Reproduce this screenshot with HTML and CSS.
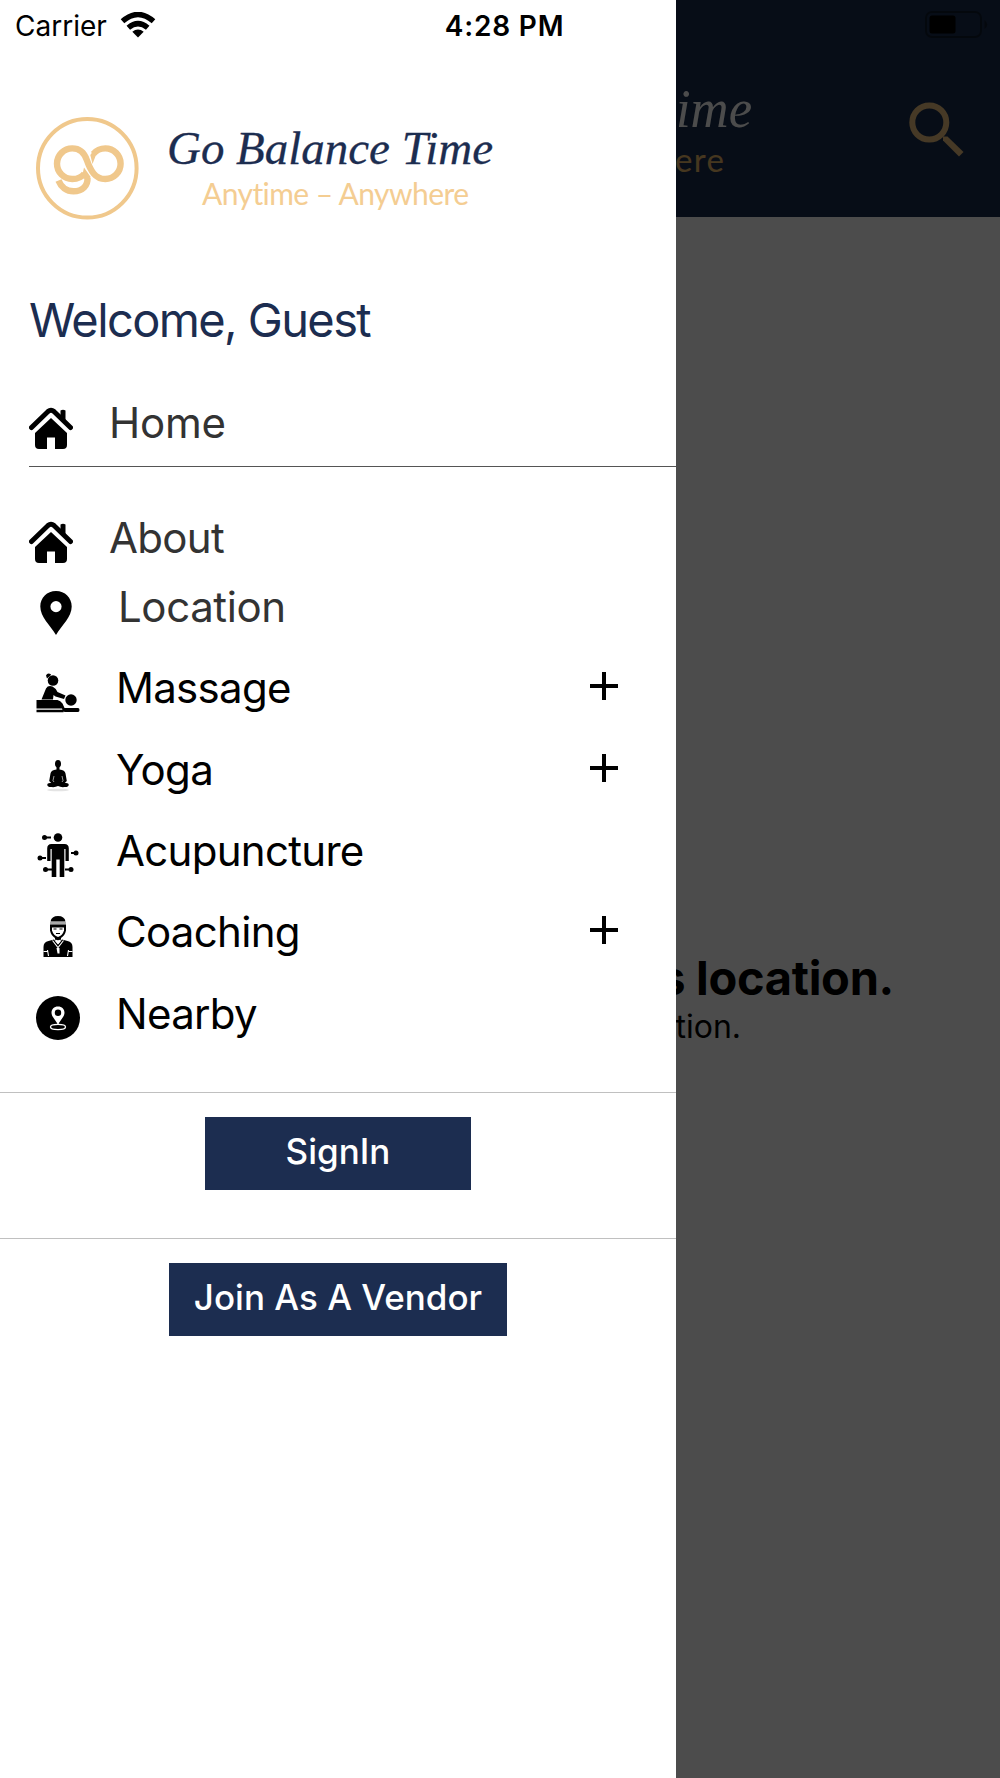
FILE: index.html
```html
<!DOCTYPE html>
<html lang="en">

	<head>
		<meta charset="utf-8" />
		<title>Go Balance Time</title>
		<link rel="stylesheet" href="styles.css">
	</head>

	<body>
		<div class="app">
			<!-- page behind the drawer -->
			<div class="page">
				<div class="page-header">
					<div class="page-status">
						<svg class="battery" width="64" height="28" viewBox="0 0 64 28">
							<rect x="1" y="1" width="55" height="25" rx="6" fill="none" stroke="#000" stroke-opacity=".4" stroke-width="2" />
							<rect x="4.500" y="4.500" width="26" height="18" rx="2.500" />
							<path d="M59.500 9 Q65 13.500 59.500 18z" fill-opacity=".4" />
						</svg>
					</div>
					<div class="page-bar">
						<svg class="page-logo" width="84" height="110" viewBox="0 0 84 110">
							<text class="title" x="1" y="56" textLength="76" lengthAdjust="spacingAndGlyphs">ime</text>
							<text class="sub" x="0" y="101" textLength="49">ere</text>
						</svg>
						<svg class="search" width="56" height="56" viewBox="0 0 56 56">
							<circle cx="20.300" cy="20.500" r="17" fill="none" stroke="#e9bf7f" stroke-width="6" />
							<path d="M34 34.500h4.500L54.500 50l-4.500 4.500-16-16z" fill="#e9bf7f" />
						</svg>
					</div>
				</div>
				<div class="page-body">
					<h2>s location.</h2>
					<p>tion.</p>
				</div>
			</div>
			<div class="mask"></div>

			<!-- drawer -->
			<div class="drawer">
				<div class="status">
					<span class="carrier">Carrier</span>
					<svg class="wifi" width="36" height="26" viewBox="0 0 36 26">
						<path d="M2.500 9.300Q18-4.300 33.500 9.300M8.300 15.800Q18 7.500 27.700 15.800" fill="none" stroke="#000" stroke-width="5.400" />
						<path d="M12.300 19.800Q18 15 23.700 19.800L18 25.500z" />
					</svg>
					<span class="time">4:28 PM</span>
				</div>

				<svg class="logo" width="480" height="110" viewBox="0 0 480 110">
					<g fill="none" stroke="#f0c88c">
						<circle cx="57.300" cy="54.300" r="49.300" stroke-width="4" />
						<!-- g bowl runs into the o -->
						<g stroke-width="6.400">
							<path d="M54.500 59.500C52 63 47.500 65 42.300 65a15.300 15.300 0 1 1 0-30.600c7.500 0 12 4.500 14.500 11.600C60.500 56.500 65 65 75.300 65a15.300 15.300 0 1 0 0-30.600c-5 0-9 2-12 5.600" />
							<path d="M28.500 66.500C31 73 36.500 77.300 43.500 77.300c9 0 14.500-5.800 14-13.300" />
						</g>
					</g>
					<path d="M52 62.500l2-9L60.700 63l-4 4zM60.300 41l2.500-3.500 3 4-3.300 8.500z" fill="#f0c88c" />
					<text class="title" x="137" y="49.500" textLength="326" lengthAdjust="spacingAndGlyphs">Go Balance Time</text>
					<text class="sub" x="172" y="90.500" textLength="267">Anytime – Anywhere</text>
				</svg>

				<h1 class="welcome">Welcome, Guest</h1>

				<div class="row row-home">
					<svg class="icon" width="44" height="44" viewBox="0 0 44 44">
						<path d="M2.500 21.500L19 5.500Q22 3 25 5.500L41.500 21.500" fill="none" stroke="#000" stroke-width="5" stroke-linecap="round" />
						<path d="M31.500 4.500q2.500-1.500 5 0V17l-5-5z" />
						<path d="M22 12L38 27v12q0 4-4 4h-8V31.500h-8V43h-8q-4 0-4-4V27z" />
					</svg>
					<span>Home</span>
				</div>

				<div class="row row-about">
					<svg class="icon" width="44" height="44" viewBox="0 0 44 44">
						<path d="M2.500 21.500L19 5.500Q22 3 25 5.500L41.500 21.500" fill="none" stroke="#000" stroke-width="5" stroke-linecap="round" />
						<path d="M31.500 4.500q2.500-1.500 5 0V17l-5-5z" />
						<path d="M22 12L38 27v12q0 4-4 4h-8V31.500h-8V43h-8q-4 0-4-4V27z" />
					</svg>
					<span>About</span>
				</div>
				<div class="row row-location">
					<svg class="icon" width="44" height="44" viewBox="0 0 44 44">
						<path d="M22 0C13 0 6.300 6.800 6.300 15.500 6.300 26 16 34 22 44c6-10 15.700-18 15.700-28.500C37.700 6.800 31 0 22 0zm0 10a5.600 5.600 0 1 1 0 11.200 5.600 5.600 0 0 1 0-11.200z" />
					</svg>
					<span>Location</span>
				</div>

				<div class="menu">
					<div class="row">
						<svg class="icon" width="44" height="44" viewBox="0 0 44 44">
							<circle cx="17" cy="9.500" r="5.300" />
							<path d="M15 3.300Q11.500 1 10 4.500l1 3 3.500-3z" />
							<path d="M5.500 28.500l4.500-11q2-3.500 6.500-2 3 1.500 5 5.500l8 3.500-1.500 3.500-8.500-2.500-2-1.500-.5 4.500z" />
							<circle cx="35" cy="29" r="5.700" />
							<path d="M.5 29h21q3 .5 5 3.500l2 4.500H42q1.500 0 1.500 2t-1.500 2H29q-2 0-3-3.500H.5zM.5 38.700h27v2.500H.5z" />
						</svg>
						<span>Massage</span>
						<svg class="plus" width="28" height="28" viewBox="0 0 28 28"><path d="M0 14h28M14 0v28" stroke="#000" stroke-width="4" /></svg>
					</div>
					<div class="row">
						<svg class="icon" width="44" height="44" viewBox="0 0 44 44">
							<ellipse cx="22" cy="38" rx="11" ry="1.300" fill="#e4e4e4" />
							<ellipse cx="22" cy="11.800" rx="3" ry="3.800" />
							<path d="M20.500 14h3v3.500q5.500.5 6 4l1.300 7.500-2 2q4-.5 4 1.700-.3 2.500-4.300 2.300-3.500.5-6.500-1-3 1.500-6.500 1-4 .2-4.300-2.300 0-2.200 4-1.700l-2-2 1.300-7.500q.5-3.500 6-4z" />
							<path d="M18 24l-1 4.500 1 1.500M26 24l1 4.500-1 1.500" fill="none" stroke="#fff" stroke-width=".6" />
						</svg>
						<span>Yoga</span>
						<svg class="plus" width="28" height="28" viewBox="0 0 28 28"><path d="M0 14h28M14 0v28" stroke="#000" stroke-width="4" /></svg>
					</div>
					<div class="row">
						<svg class="icon" width="44" height="44" viewBox="0 0 44 44">
							<circle cx="22" cy="4.500" r="4.300" />
							<path d="M15.500 11h13q4.300 0 4.300 4.500V28h-3.300V16h-1.200v28h-4.600V26.500h-3.400V44h-4.600V16h-1.200v12h-3.300V15.500q0-4.500 4.300-4.500z" />
							<path d="M8 4.500h7M4 25h6M10 36.500h6M41 20h-6M35 36.500h-6" stroke="#000" stroke-width="2.200" />
							<circle cx="8.500" cy="4.500" r="2.500" />
							<circle cx="4" cy="25" r="2.500" />
							<circle cx="9.500" cy="36.500" r="2.500" />
							<circle cx="40" cy="20" r="2.500" />
							<circle cx="35" cy="36.500" r="2.500" />
						</svg>
						<span>Acupuncture</span>
					</div>
					<div class="row">
						<svg class="icon" width="44" height="44" viewBox="0 0 44 44">
							<path d="M14.500 6.500Q15.500 1 22 1t7.500 5.500z" />
							<path d="M14 7h16v2.500H14z" fill="#aaa" />
							<path d="M14 9.500h16v6q-1 5-5 7.500v3l-3 1.500-3-1.500v-3q-4-2.500-5-7.500z" />
							<path d="M16 12.500h12v3q-1.500 5-6 6.500-4.500-1.500-6-6.500z" fill="#fff" />
							<path d="M17.500 14h3M23.500 14h3M20 18.500h4" stroke="#000" stroke-width="1.200" />
							<path d="M7.500 42V32q0-5 5-6l5.500-1.500 4 5 4-5 5.500 1.500q5 1 5 6v10z" />
							<path d="M16.500 25.500l5.500 7 5.500-7M7.500 36.500H12M32 36.500h4.500M12.500 41l-1-6M31.500 41l1-6" fill="none" stroke="#fff" stroke-width="1.100" />
							<path d="M20.500 33h3v5.500h-2z" fill="#fff" />
							<path d="M19.500 24.500q2.500 1.500 5 0l.5 1.500-3 3-3-3z" fill="#fff" />
						</svg>
						<span>Coaching</span>
						<svg class="plus" width="28" height="28" viewBox="0 0 28 28"><path d="M0 14h28M14 0v28" stroke="#000" stroke-width="4" /></svg>
					</div>
					<div class="row">
						<svg class="icon" width="44" height="44" viewBox="0 0 44 44">
							<circle cx="22" cy="22" r="22" />
							<ellipse cx="22" cy="31" rx="7.500" ry="2.600" fill="none" stroke="#fff" stroke-width="1.300" />
							<path d="M22 10.500c-4 0-6.500 2.700-6.500 6.300C15.500 21 20 24 22 29c2-5 6.500-8 6.500-12.200 0-3.600-2.500-6.300-6.500-6.300z" fill="#fff" />
							<circle cx="22" cy="16.800" r="3.200" />
						</svg>
						<span>Nearby</span>
					</div>
				</div>

				<div class="action">
					<button class="btn btn-signin">SignIn</button>
				</div>
				<div class="action">
					<button class="btn btn-vendor">Join As A Vendor</button>
				</div>
			</div>
		</div>
	</body>

</html>
```
FILE: styles.css
```css
* {
	margin: 0;
	padding: 0;
	box-sizing: border-box;
}

body {
	font-family: Inter, "Liberation Sans", sans-serif;
	background: #fff;
	color: #000;
}

svg {
	display: block;
	flex: none;
}

.app {
	position: relative;
	width: 1000px;
	height: 1778px;
	overflow: hidden;
}

/* page */
.page {
	display: flex;
	flex-direction: column;
	height: 100%;
}

.page-header {
	height: 217px;
	background: #1a2d4d;
}

.page-status {
	display: flex;
	justify-content: flex-end;
	height: 51px;
	padding: 11px 11px 0 0;
}

.page-bar {
	display: flex;
	justify-content: space-between;
	padding: 20px 35px 0 675px;
}

.search {
	margin-top: 31px;
}

.page-body {
	flex: 1;
	padding: 733px 106px 0 0;
}

.page-body h2 {
	font-size: 47px;
	line-height: 56px;
	letter-spacing: -.3px;
	text-align: right;
}

.page-body p {
	padding: 2px 153px 0 0;
	font-size: 32px;
	line-height: 38px;
	text-align: right;
}

.mask {
	position: absolute;
	top: 0;
	left: 0;
	width: 100%;
	height: 100%;
	background: rgba(0, 0, 0, .7);
}

/* drawer */
.drawer {
	position: absolute;
	top: 0;
	left: 0;
	width: 676px;
	height: 100%;
	background: #fff;
}

.status {
	display: flex;
	align-items: center;
	height: 51px;
	padding-left: 15px;
	font-size: 28px;
}

.wifi {
	margin: 0 0 2px 13px;
}

.time {
	margin-left: 289px;
	font-weight: 600;
	letter-spacing: .8px;
}

.logo {
	margin: 63px 0 0 30px;
}

.title {
	font-family: "Liberation Serif", serif;
	font-size: 47px;
	font-style: italic;
	fill: #1c2d50;
	stroke: #1c2d50;
	stroke-width: .3px;
}

.sub {
	font-family: Lato, sans-serif;
	font-size: 30px;
	font-variant-ligatures: none;
	fill: #f4cd92;
}

.page-logo .title {
	font-size: 54px;
	fill: #fff;
	stroke: none;
}

.page-logo .sub {
	font-size: 33px;
	fill: #e9b96a;
}

.welcome {
	margin: 66px 0 0 29px;
	font-size: 47px;
	font-weight: 400;
	line-height: 60px;
	letter-spacing: -1.6px;
	color: #1c2d50;
}

.row {
	display: flex;
	align-items: center;
	height: 81.4px;
	padding-left: 36px;
	font-size: 42px;
	letter-spacing: -.7px;
}

.row .icon {
	margin: 10px 36px 0 0;
}

.row-home {
	height: 87px;
	margin: 30px 0 0 29px;
	padding: 0 0 1px;
	border-bottom: 1px solid #555;
	letter-spacing: -.2px;
	color: #333;
}

.row-about {
	height: 70px;
	margin-top: 35px;
	padding-left: 29px;
	color: #333;
}

.row-about .icon {
	margin-right: 36px;
}

.row-location {
	height: 68px;
	padding-left: 34px;
	letter-spacing: -.4px;
	color: #333;
}

.row-location .icon {
	margin: 14px 40px 0 0;
}

.menu {
	padding: 7px 0 38px;
}

.plus {
	margin: 0 58px 3px auto;
}

.action {
	height: 146px;
	padding-top: 24px;
	border-top: 1px solid #c0c0c0;
	text-align: center;
}

.btn {
	height: 73px;
	padding-bottom: 4px;
	border: 0;
	background: #1c2d50;
	font-family: inherit;
	font-size: 35px;
	font-weight: 500;
	color: #fff;
}

.btn-signin {
	width: 266px;
}

.btn-vendor {
	width: 338px;
}
```
